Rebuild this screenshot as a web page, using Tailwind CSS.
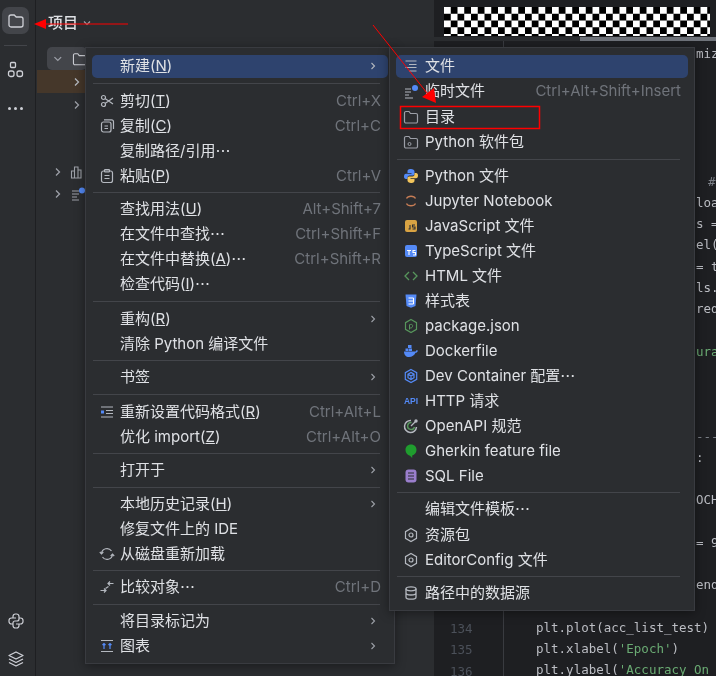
<!DOCTYPE html>
<html lang="zh">
<head>
<meta charset="utf-8">
<script src="https://cdn.jsdelivr.net/npm/@tailwindcss/browser@4"></script>
<title>项目</title>
</head>
<body class="m-0 bg-[#2b2d30]">
<div class="relative flex h-[676px] w-[716px] overflow-hidden bg-[#2b2d30] font-['Inter','Noto_Sans_CJK_SC',sans-serif] text-[15px] text-[#dfe1e5] blur-[0.3px]">

  <!-- tool strip -->
  <div class="flex h-full w-[36px] shrink-0 flex-col items-center border-r border-[#1e1f22] pr-[4px] pt-[7px]">
    <div class="flex h-[27px] w-[27px] shrink-0 items-center justify-center rounded-[7px] bg-[#43454a]">
      <svg class="h-[18px] w-[18px]" viewBox="0 0 18 18" fill="none" stroke="#ced0d6" stroke-width="1.3"><path d="M2 5a2 2 0 0 1 2-2h3.2l2 2H14a2 2 0 0 1 2 2v6a2 2 0 0 1-2 2H4a2 2 0 0 1-2-2z"/></svg>
    </div>
    <div class="mt-[11px] h-px w-[23px] shrink-0 bg-[#43454a]"></div>
    <svg class="mt-[15px] h-[17px] w-[17px] shrink-0" viewBox="0 0 17 17" fill="none" stroke="#ced0d6" stroke-width="1.3"><rect x="3.500" y="1.500" width="5" height="5" rx="1"/><rect x="1.500" y="10" width="5.500" height="5.500" rx="2"/><rect x="10" y="10" width="5.500" height="5.500" rx="2"/></svg>
    <div class="mt-[29px] flex shrink-0 gap-[3px]">
      <span class="h-[3px] w-[3px] rounded-full bg-[#ced0d6]"></span>
      <span class="h-[3px] w-[3px] rounded-full bg-[#ced0d6]"></span>
      <span class="h-[3px] w-[3px] rounded-full bg-[#ced0d6]"></span>
    </div>
    <svg class="mt-auto h-[18px] w-[18px] shrink-0" viewBox="0 0 18 18" fill="none" stroke="#ced0d6" stroke-width="1.200"><path d="M6 6V4.500A2.500 2.500 0 0 1 8.500 2h1A2.500 2.500 0 0 1 12 4.500V7a2 2 0 0 1-2 2H8a2 2 0 0 0-2 2v2.500A2.500 2.500 0 0 0 8.500 16h1a2.500 2.500 0 0 0 2.500-2.500V12"/><path d="M9 6H4.500A2.500 2.500 0 0 0 2 8.500v1A2.500 2.500 0 0 0 4.500 12H6M12 6h1.500A2.500 2.500 0 0 1 16 8.500v1a2.500 2.500 0 0 1-2.500 2.500H9"/></svg>
    <svg class="mb-[8px] mt-[20px] h-[18px] w-[18px] shrink-0" viewBox="0 0 18 18" fill="none" stroke="#ced0d6" stroke-width="1.3" stroke-linejoin="round"><path d="M9 2l7 3.500L9 9 2 5.500z"/><path d="M2 9l7 3.500L16 9"/><path d="M2 12.500L9 16l7-3.500"/></svg>
  </div>

  <!-- project panel -->
  <div class="flex h-full w-[398px] shrink-0 flex-col">
    <div class="flex h-[47px] items-center pb-[1px] pl-[12px]">
      <span class="font-medium text-[#dfe1e5]">项目</span>
      <svg class="ml-[4px] h-[10px] w-[10px]" viewBox="0 0 10 10" fill="none" stroke="#9da0a8" stroke-width="1.2"><path d="M2 3.500L5 6.500 8 3.500"/></svg>
    </div>
    <div class="ml-[11px] flex h-[23px] w-[40px] items-center rounded-[5px] bg-[#43454a] pl-[6px]">
      <svg class="h-[10px] w-[10px]" viewBox="0 0 10 10" fill="none" stroke="#9da0a8" stroke-width="1.300"><path d="M1.500 3L5 6.500 8.500 3"/></svg>
      <svg class="ml-[9px] h-[16px] w-[16px]" viewBox="0 0 16 16" fill="none" stroke="#ced0d6" stroke-width="1.100"><path d="M1.500 4a1.500 1.500 0 0 1 1.500-1.500h3l1.500 2H13A1.500 1.500 0 0 1 14.500 6v6.500A1.500 1.500 0 0 1 13 14H3a1.500 1.500 0 0 1-1.500-1.500z"/></svg>
    </div>
    <div class="ml-[1px] flex h-[23px] items-center bg-[#45372a] pl-[35px]">
      <svg class="h-[10px] w-[10px]" viewBox="0 0 10 10" fill="none" stroke="#b4b8bf" stroke-width="1.300"><path d="M3 1.500L6.500 5 3 8.500"/></svg>
    </div>
    <div class="flex h-[23px] items-center pl-[36px]">
      <svg class="h-[10px] w-[10px]" viewBox="0 0 10 10" fill="none" stroke="#9da0a8" stroke-width="1.300"><path d="M3 1.500L6.500 5 3 8.500"/></svg>
    </div>
    <div class="mt-[45px] flex h-[22px] items-center pl-[17px]">
      <svg class="h-[10px] w-[10px]" viewBox="0 0 10 10" fill="none" stroke="#9da0a8" stroke-width="1.300"><path d="M3 1.500L6.500 5 3 8.500"/></svg>
      <svg class="ml-[7px] h-[16px] w-[16px]" viewBox="0 0 16 16" fill="none" stroke="#9da0a8" stroke-width="1.100"><path d="M1.500 14V7h3v7zM4.500 14V3h3.500v11zM8 14V6h3v8z"/></svg>
    </div>
    <div class="flex h-[22px] items-center pl-[17px]">
      <svg class="h-[10px] w-[10px]" viewBox="0 0 10 10" fill="none" stroke="#9da0a8" stroke-width="1.300"><path d="M3 1.500L6.500 5 3 8.500"/></svg>
      <svg class="ml-[7px] h-[16px] w-[16px]" viewBox="0 0 16 16" fill="none"><path d="M2 5h7M2 8h7M2 11h5M2 14h7" stroke="#9da0a8" stroke-width="1.200"/><circle cx="12" cy="4.500" r="3" fill="#548af7"/></svg>
    </div>
  </div>

  <!-- editor -->
  <div class="relative flex h-full min-w-0 flex-1 flex-col bg-[#1e1f22]">
    <div class="flex h-[37px] shrink-0 items-end pb-px pl-[10px]">
      <div class="h-[29px] w-[266px] bg-[repeating-conic-gradient(#000_0_25%,#fff_0_50%)] bg-[length:13.500px_13.500px]"></div>
    </div>
    <div class="relative h-[4px] shrink-0 bg-[#2b2d30]">
      <div class="absolute bottom-0 left-[146px] right-0 top-0 bg-[#6f737a]"></div>
    </div>
    <div class="flex min-h-0 flex-1 font-['DejaVu_Sans_Mono',monospace] text-[12.500px] leading-[21.250px] text-[#bcbec4]">
      <div class="h-full w-[70px] shrink-0 border-r border-[#393b40] pl-[16px] pt-[577px] text-[#4b5059]">
        <div>134</div><div>135</div><div>136</div>
      </div>
      <div class="flex-1 whitespace-nowrap pl-[192px] pt-[2px]">
        <div>miz</div>
        <div>&nbsp;</div><div>&nbsp;</div><div>&nbsp;</div><div>&nbsp;</div><div>&nbsp;</div>
        <div class="pl-[12px] text-[#7a7e85]">#</div>
        <div>loa</div>
        <div>s =</div>
        <div>el(</div>
        <div>= t</div>
        <div>ls.</div>
        <div>red</div>
        <div>&nbsp;</div>
        <div class="text-[#6aab73]">ura</div>
        <div>&nbsp;</div><div>&nbsp;</div><div>&nbsp;</div>
        <div class="text-[#7a7e85]">---</div>
        <div>:</div>
        <div>&nbsp;</div>
        <div>OCH</div>
        <div>&nbsp;</div>
        <div>= 9</div>
        <div>&nbsp;</div>
        <div>end</div>
        <div>&nbsp;</div>
        <div class="-ml-[160px]">plt.plot(acc_list_test)</div>
        <div class="-ml-[160px]">plt.xlabel(<span class="text-[#6aab73]">'Epoch'</span>)</div>
        <div class="-ml-[160px]">plt.ylabel(<span class="text-[#6aab73]">'Accuracy On</span></div>
      </div>
    </div>
  </div>

  <!-- context menu -->
  <div class="absolute left-[85px] top-[47px] h-[617px] w-[310px] border border-[#393b40] bg-[#2b2d30] px-[6px] pt-[5.500px] shadow-[0_2px_10px_rgba(0,0,0,0.4)]">
    <div class="mb-[1px] mt-[1.500px] flex h-[22.500px] items-center rounded-[5px] bg-[#2e436e] pl-[28px] pr-[10px]">新建(<u>N</u>)<svg class="ml-auto h-[10px] w-[10px]" viewBox="0 0 10 10" fill="none" stroke="#b4b8bf" stroke-width="1.100"><path d="M3.500 2L6.500 5 3.500 8"/></svg></div>
    <div class="flex h-[10px] items-center pl-[1px] pr-[8px]"><div class="h-px w-full bg-[#43454a]"></div></div>

    <div class="flex h-[25px] items-center pl-[7px] pr-[7px]"><svg class="mr-[5px] h-[16px] w-[16px]" viewBox="0 0 16 16" fill="none" stroke="#b4b8bf" stroke-width="1.200"><circle cx="4.500" cy="4.500" r="2"/><circle cx="4.500" cy="11.500" r="2"/><path d="M6 5.500L14 11M6 10.500L14 5"/></svg>剪切(<u>T</u>)<span class="ml-auto text-[#6f737a]">Ctrl+X</span></div>
    <div class="flex h-[25px] items-center pl-[7px] pr-[7px]"><svg class="mr-[5px] h-[16px] w-[16px]" viewBox="0 0 16 16" fill="none" stroke="#b4b8bf" stroke-width="1.200"><rect x="2.500" y="4" width="9.500" height="10" rx="2"/><path d="M5 1.800h7.500a2 2 0 0 1 2 2V11"/><path d="M5.500 8h3.500M5.500 10.500h3.500"/></svg>复制(<u>C</u>)<span class="ml-auto text-[#6f737a]">Ctrl+C</span></div>
    <div class="flex h-[25px] items-center pl-[28px] pr-[7px]">复制路径/引用<span class="font-['Noto_Sans_CJK_SC',sans-serif]">…</span></div>
    <div class="flex h-[25px] items-center pl-[7px] pr-[7px]"><svg class="mr-[5px] h-[16px] w-[16px]" viewBox="0 0 16 16" fill="none" stroke="#b4b8bf" stroke-width="1.200"><rect x="2.500" y="3" width="11" height="11.500" rx="2"/><rect x="5.500" y="1.500" width="5" height="2.500" rx=".8"/><path d="M5.500 7.500h5M5.500 10.500h5"/></svg>粘贴(<u>P</u>)<span class="ml-auto text-[#6f737a]">Ctrl+V</span></div>
    <div class="flex h-[8px] items-center pl-[1px] pr-[8px]"><div class="h-px w-full bg-[#43454a]"></div></div>

    <div class="flex h-[25px] items-center pl-[28px] pr-[7px]">查找用法(<u>U</u>)<span class="ml-auto text-[#6f737a]">Alt+Shift+7</span></div>
    <div class="flex h-[25px] items-center pl-[28px] pr-[7px]">在文件中查找<span class="font-['Noto_Sans_CJK_SC',sans-serif]">…</span><span class="ml-auto text-[#6f737a]">Ctrl+Shift+F</span></div>
    <div class="flex h-[25px] items-center pl-[28px] pr-[7px]">在文件中替换(<u>A</u>)<span class="font-['Noto_Sans_CJK_SC',sans-serif]">…</span><span class="ml-auto text-[#6f737a]">Ctrl+Shift+R</span></div>
    <div class="flex h-[25px] items-center pl-[28px] pr-[7px]">检查代码(<u>I</u>)<span class="font-['Noto_Sans_CJK_SC',sans-serif]">…</span></div>
    <div class="flex h-[10px] items-center pl-[1px] pr-[8px]"><div class="h-px w-full bg-[#43454a]"></div></div>

    <div class="flex h-[25px] items-center pl-[28px] pr-[10px]">重构(<u>R</u>)<svg class="ml-auto h-[10px] w-[10px]" viewBox="0 0 10 10" fill="none" stroke="#9da0a8" stroke-width="1.100"><path d="M3.500 2L6.500 5 3.500 8"/></svg></div>
    <div class="flex h-[25px] items-center pl-[28px] pr-[7px]">清除 Python 编译文件</div>
    <div class="flex h-[8px] items-center pl-[1px] pr-[8px]"><div class="h-px w-full bg-[#43454a]"></div></div>

    <div class="flex h-[25px] items-center pl-[28px] pr-[10px]">书签<svg class="ml-auto h-[10px] w-[10px]" viewBox="0 0 10 10" fill="none" stroke="#9da0a8" stroke-width="1.100"><path d="M3.500 2L6.500 5 3.500 8"/></svg></div>
    <div class="flex h-[10px] items-center pl-[1px] pr-[8px]"><div class="h-px w-full bg-[#43454a]"></div></div>

    <div class="flex h-[25px] items-center pl-[7px] pr-[7px]"><svg class="mr-[5px] h-[16px] w-[16px]" viewBox="0 0 16 16" fill="none" stroke="#b4b8bf" stroke-width="1.200"><path d="M2 3h12M7 6.500h7M7 9.500h7M2 13h12"/><rect x="2" y="6.500" width="3" height="3" fill="#548af7" stroke="none"/></svg>重新设置代码格式(<u>R</u>)<span class="ml-auto text-[#6f737a]">Ctrl+Alt+L</span></div>
    <div class="flex h-[25px] items-center pl-[28px] pr-[7px]">优化 import(<u>Z</u>)<span class="ml-auto text-[#6f737a]">Ctrl+Alt+O</span></div>
    <div class="flex h-[8px] items-center pl-[1px] pr-[8px]"><div class="h-px w-full bg-[#43454a]"></div></div>

    <div class="flex h-[25px] items-center pl-[28px] pr-[10px]">打开于<svg class="ml-auto h-[10px] w-[10px]" viewBox="0 0 10 10" fill="none" stroke="#9da0a8" stroke-width="1.100"><path d="M3.500 2L6.500 5 3.500 8"/></svg></div>
    <div class="flex h-[9px] items-center pl-[1px] pr-[8px]"><div class="h-px w-full bg-[#43454a]"></div></div>

    <div class="flex h-[25px] items-center pl-[28px] pr-[10px]">本地历史记录(<u>H</u>)<svg class="ml-auto h-[10px] w-[10px]" viewBox="0 0 10 10" fill="none" stroke="#9da0a8" stroke-width="1.100"><path d="M3.500 2L6.500 5 3.500 8"/></svg></div>
    <div class="flex h-[25px] items-center pl-[28px] pr-[7px]">修复文件上的 IDE</div>
    <div class="flex h-[25px] items-center pl-[7px] pr-[7px]"><svg class="mr-[5px] h-[16px] w-[16px]" viewBox="0 0 16 16" fill="none" stroke="#b4b8bf" stroke-width="1.200"><path d="M2.500 7.500A5.500 5.500 0 0 1 12.500 5M13.500 8.500A5.500 5.500 0 0 1 3.500 11"/><path d="M.8 6l1.700 1.800L4.300 6M11.700 10l1.800-1.800L15.200 10"/></svg>从磁盘重新加载</div>
    <div class="flex h-[8px] items-center pl-[1px] pr-[8px]"><div class="h-px w-full bg-[#43454a]"></div></div>

    <div class="flex h-[25px] items-center pl-[7px] pr-[7px]"><svg class="mr-[5px] h-[16px] w-[16px]" viewBox="0 0 16 16" fill="none" stroke="#b4b8bf" stroke-width="1.200"><path d="M14.500 4.500H9M11 2.500L9 4.500 11 6.500"/><path d="M1.500 11.500H7M5 9.500l2 2-2 2"/><path d="M9.500 7.500L6.500 9.500"/></svg>比较对象<span class="font-['Noto_Sans_CJK_SC',sans-serif]">…</span><span class="ml-auto text-[#6f737a]">Ctrl+D</span></div>
    <div class="flex h-[9px] items-center pl-[1px] pr-[8px]"><div class="h-px w-full bg-[#43454a]"></div></div>

    <div class="flex h-[25px] items-center pl-[28px] pr-[10px]">将目录标记为<svg class="ml-auto h-[10px] w-[10px]" viewBox="0 0 10 10" fill="none" stroke="#9da0a8" stroke-width="1.100"><path d="M3.500 2L6.500 5 3.500 8"/></svg></div>
    <div class="flex h-[25px] items-center pl-[7px] pr-[10px]"><svg class="mr-[5px] h-[16px] w-[16px]" viewBox="0 0 16 16" fill="none" stroke-width="1.200"><path d="M2 2.500h12M2 13.500h12" stroke="#b4b8bf"/><path d="M5 11V5.500M3.500 7L5 5.500 6.500 7M11 11V5.500M9.500 7L11 5.500 12.500 7" stroke="#548af7"/></svg>图表<svg class="ml-auto h-[10px] w-[10px]" viewBox="0 0 10 10" fill="none" stroke="#9da0a8" stroke-width="1.100"><path d="M3.500 2L6.500 5 3.500 8"/></svg></div>
  </div>

  <!-- submenu -->
  <div class="absolute left-[389px] top-[47px] h-[564px] w-[306px] border border-[#393b40] bg-[#2b2d30] px-[6px] pt-[5.500px] shadow-[0_2px_10px_rgba(0,0,0,0.4)]">
    <div class="mb-[1px] mt-[1.500px] flex h-[22.500px] items-center rounded-[5px] bg-[#2e436e] pl-[7px] pr-[7px]"><svg class="mr-[6px] h-[16px] w-[16px]" viewBox="0 0 16 16" fill="none" stroke="#b4b8bf" stroke-width="1.200"><path d="M2.500 3h11M6 6.500h7.500M2.500 9.500h11M6 13h7.500"/></svg>文件</div>
    <div class="flex h-[26px] items-center pl-[7px] pr-[7px]"><svg class="mr-[6px] h-[16px] w-[16px]" viewBox="0 0 16 16" fill="none"><path d="M2 5h6M2 8h6M2 11h4M2 14h8" stroke="#b4b8bf" stroke-width="1.200"/><circle cx="12" cy="4" r="3" fill="#548af7"/></svg>临时文件<span class="ml-auto text-[#6f737a]">Ctrl+Alt+Shift+Insert</span></div>
    <div class="flex h-[25px] items-center pl-[7px] pr-[7px]"><svg class="mr-[6px] h-[16px] w-[16px]" viewBox="0 0 16 16" fill="none" stroke="#9da0a8" stroke-width="1.200"><path d="M1.500 4a1.500 1.500 0 0 1 1.500-1.500h3l1.500 2H13A1.500 1.500 0 0 1 14.500 6v6.500A1.500 1.500 0 0 1 13 14H3a1.500 1.500 0 0 1-1.500-1.500z"/></svg>目录</div>
    <div class="flex h-[25px] items-center pl-[7px] pr-[7px]"><svg class="mr-[6px] h-[16px] w-[16px]" viewBox="0 0 16 16" fill="none" stroke="#9da0a8" stroke-width="1.200"><path d="M1.500 4a1.500 1.500 0 0 1 1.500-1.500h3l1.500 2H13A1.500 1.500 0 0 1 14.500 6v6.500A1.500 1.500 0 0 1 13 14H3a1.500 1.500 0 0 1-1.500-1.500z"/><circle cx="6.500" cy="10" r="1.500" stroke-width="1"/></svg>Python 软件包</div>
    <div class="flex h-[9px] items-center pl-[1px] pr-[8px]"><div class="h-px w-full bg-[#43454a]"></div></div>

    <div class="flex h-[25px] items-center pl-[7px] pr-[7px]"><svg class="mr-[6px] h-[16px] w-[16px]" viewBox="0 0 16 16"><path d="M8 1C5 1 4.500 2.200 4.500 3.500V5H8.500v.8H3C1.600 5.800 1 7 1 8.500S1.600 11 3 11h1.500V9.500c0-1.300 1-2 2-2h3.500c1 0 1.500-.8 1.500-1.700V3.500C11.500 2 10 1 8 1z" fill="#548af7"/><path d="M8 15c3 0 3.500-1.200 3.500-2.500V11H7.500v-.8H13c1.400 0 2-1.200 2-2.700S14.400 5 13 5h-1.500v1.500c0 1.300-1 2-2 2H6c-1 0-1.500.8-1.500 1.700v2.300C4.500 14 6 15 8 15z" fill="#f2c55c"/></svg>Python 文件</div>
    <div class="flex h-[25px] items-center pl-[7px] pr-[7px]"><svg class="mr-[6px] h-[16px] w-[16px]" viewBox="0 0 16 16" fill="none" stroke="#c77d55" stroke-width="1.300"><path d="M3.500 5.500C5 2.500 11 2.500 12.500 5.500M3.500 10.500C5 13.500 11 13.500 12.500 10.500"/></svg>Jupyter Notebook</div>
    <div class="flex h-[25px] items-center pl-[7px] pr-[7px]"><svg class="mr-[6px] h-[16px] w-[16px]" viewBox="0 0 16 16"><rect x="2" y="2" width="12" height="12" rx="2" fill="#d9a343"/><path d="M7 7v4H5.500M12 7h-2.500v2H12v2H9.500" fill="none" stroke="#2b2d30" stroke-width="1.100"/></svg>JavaScript 文件</div>
    <div class="flex h-[25px] items-center pl-[7px] pr-[7px]"><svg class="mr-[6px] h-[16px] w-[16px]" viewBox="0 0 16 16"><rect x="2" y="2" width="12" height="12" rx="2" fill="#548af7"/><path d="M4 7.500h4M6 7.500V12M12.500 7.500h-2.500v2h2.500v2.500H10" fill="none" stroke="#fff" stroke-width="1.100"/></svg>TypeScript 文件</div>
    <div class="flex h-[25px] items-center pl-[7px] pr-[7px]"><svg class="mr-[6px] h-[16px] w-[16px]" viewBox="0 0 16 16" fill="none" stroke="#57965c" stroke-width="1.300"><path d="M6 4L2 8l4 4M10 4l4 4-4 4"/></svg>HTML 文件</div>
    <div class="flex h-[25px] items-center pl-[7px] pr-[7px]"><svg class="mr-[6px] h-[16px] w-[16px]" viewBox="0 0 16 16"><path d="M2.500 1.500h11l-1 11.500L8 14.700 3.500 13z" fill="#548af7"/><path d="M5.500 5h5M5.500 8h5M5.500 11h5M10.500 5v6" stroke="#fff" stroke-width="1.100" fill="none"/></svg>样式表</div>
    <div class="flex h-[25px] items-center pl-[7px] pr-[7px]"><svg class="mr-[6px] h-[16px] w-[16px]" viewBox="0 0 16 16" fill="none" stroke="#57965c" stroke-width="1.200"><path d="M8 1.500l5.500 3.200v6.600L8 14.500l-5.500-3.200V4.700z"/><path d="M6.500 6.500v5M6.500 7c2.500-1.500 3.500 0 3 1.500S8 10 7 10" stroke-width="1"/></svg>package.json</div>
    <div class="flex h-[25px] items-center pl-[7px] pr-[7px]"><svg class="mr-[6px] h-[16px] w-[16px]" viewBox="0 0 16 16" fill="#548af7"><rect x="5" y="2" width="3.500" height="3"/><rect x="2.500" y="5.500" width="3" height="2.500"/><rect x="6" y="5.500" width="3" height="2.500"/><path d="M1 8.500h11c.8 0 1.500-.7 1.500-1.500l1.500.7c-.5 1.300-1.500 2-2.500 2.100C11.500 12.500 9 14 6 14c-3 0-5-2-5-5.500z"/></svg>Dockerfile</div>
    <div class="flex h-[25px] items-center pl-[7px] pr-[7px]"><svg class="mr-[6px] h-[16px] w-[16px]" viewBox="0 0 16 16" fill="none" stroke="#548af7" stroke-width="1.200"><path d="M8 1.500l5.700 3.200v6.600L8 14.500l-5.700-3.200V4.700z"/><path d="M5 6.200L8 4.500l3 1.700v3.500L8 11.500 5 9.700zM5 6.200l3 1.800 3-1.800M8 8v3.500"/></svg>Dev Container 配置<span class="font-['Noto_Sans_CJK_SC',sans-serif]">…</span></div>
    <div class="flex h-[25px] items-center pl-[7px] pr-[7px]"><span class="mr-[6px] flex h-[16px] w-[16px] items-center justify-center font-['Liberation_Sans',sans-serif] text-[8.500px] font-bold text-[#548af7]">API</span>HTTP 请求</div>
    <div class="flex h-[25px] items-center pl-[7px] pr-[7px]"><svg class="mr-[6px] h-[16px] w-[16px]" viewBox="0 0 16 16" fill="none"><path d="M13.500 9A6 6 0 1 1 8 2.500" stroke="#b4b8bf" stroke-width="1.500"/><path d="M11.500 9a3.500 3.500 0 1 1-3-4.500" stroke="#57965c" stroke-width="1.500"/><path d="M8 8l4.500-4.500" stroke="#b4b8bf" stroke-width="1.300"/><circle cx="13" cy="3" r="1.700" fill="#b4b8bf"/></svg>OpenAPI 规范</div>
    <div class="flex h-[25px] items-center pl-[7px] pr-[7px]"><svg class="mr-[6px] h-[16px] w-[16px]" viewBox="0 0 16 16"><path d="M8 1.500c3.500 0 5.500 2.400 5.500 5.500 0 2.800-2 4.800-4.300 5.500V15L7 12.800C4.500 12.300 2.500 10 2.500 7c0-3.100 2-5.500 5.500-5.500z" fill="#1f9d2e"/></svg>Gherkin feature file</div>
    <div class="flex h-[25px] items-center pl-[7px] pr-[7px]"><svg class="mr-[6px] h-[16px] w-[16px]" viewBox="0 0 16 16"><rect x="2.500" y="1.500" width="11" height="13" rx="3" fill="#9a7ecc"/><path d="M5 5h6M5 8h6M5 11h6" stroke="#2b2d30" stroke-width="1.100"/></svg>SQL File</div>
    <div class="flex h-[8px] items-center pl-[1px] pr-[8px]"><div class="h-px w-full bg-[#43454a]"></div></div>

    <div class="flex h-[26px] items-center pl-[29px] pr-[7px]">编辑文件模板<span class="font-['Noto_Sans_CJK_SC',sans-serif]">…</span></div>
    <div class="flex h-[25px] items-center pl-[7px] pr-[7px]"><svg class="mr-[6px] h-[16px] w-[16px]" viewBox="0 0 16 16" fill="none" stroke="#b4b8bf" stroke-width="1.200"><path d="M8 1.500l5.500 3.200v6.600L8 14.500l-5.500-3.200V4.700z"/><circle cx="8" cy="8" r="2"/></svg>资源包</div>
    <div class="flex h-[25px] items-center pl-[7px] pr-[7px]"><svg class="mr-[6px] h-[16px] w-[16px]" viewBox="0 0 16 16" fill="none" stroke="#b4b8bf" stroke-width="1.200"><path d="M8 1.500l5.500 3.200v6.600L8 14.500l-5.500-3.200V4.700z"/><circle cx="8" cy="8" r="2"/></svg>EditorConfig 文件</div>
    <div class="flex h-[8px] items-center pl-[1px] pr-[8px]"><div class="h-px w-full bg-[#43454a]"></div></div>

    <div class="flex h-[25px] items-center pl-[7px] pr-[7px]"><svg class="mr-[6px] h-[16px] w-[16px]" viewBox="0 0 16 16" fill="none" stroke="#b4b8bf" stroke-width="1.300"><ellipse cx="8" cy="3.800" rx="5" ry="2"/><path d="M3 3.800v8.400c0 1.100 2.200 2 5 2s5-.9 5-2V3.800M3 8c0 1.100 2.200 2 5 2s5-.9 5-2"/></svg>路径中的数据源</div>
  </div>

  <!-- red annotations -->
  <svg class="pointer-events-none absolute inset-0 h-[676px] w-[716px]" viewBox="0 0 716 676" fill="none">
    <path d="M40 24H128" stroke="#f00" stroke-width="1"/>
    <path d="M34 24l12-5v10z" fill="#f00"/>
    <path d="M373 25L431 98" stroke="#f00" stroke-width="1"/>
    <path d="M436 103l-14-6 12-9z" fill="#f00"/>
    <rect x="400.500" y="106.500" width="139" height="22" stroke="#f00" stroke-width="1.500"/>
  </svg>
</div>
</body>
</html>
